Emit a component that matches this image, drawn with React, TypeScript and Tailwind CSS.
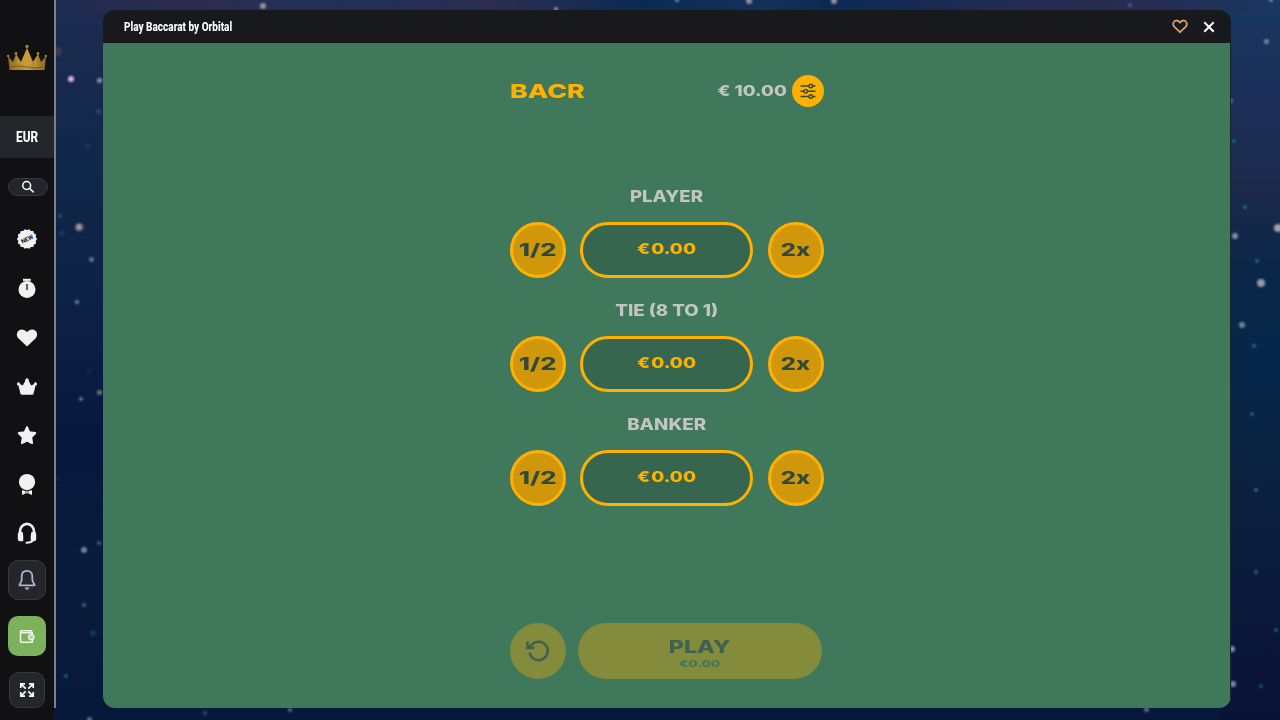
import React from "react";

const wide = "font-[Inter,sans-serif] font-extrabold whitespace-nowrap leading-none";

// x, y, diameter, colour
const stars: [number, number, number, string][] = [
  [71, 79, 6, "#e3b0f0"], [99, 80, 5, "#8f93a8"], [98, 111, 5, "#32446a"], [87, 146, 5, "#223959"],
  [57, 51, 9, "#3c3a4f"], [60, 216, 4, "#1d5570"], [61, 233, 5, "#164070"], [79, 227, 9, "#54465a"], [79, 227, 6, "#a19ba3"],
  [91, 259, 5, "#66758f"], [77, 302, 4, "#79869d"], [89, 371, 6, "#15264c"], [99, 392, 5, "#6d7a70"],
  [81, 399, 4, "#6d7e9c"], [56, 479, 3, "#0d3c60"], [84, 550, 6, "#7684a2"], [99, 543, 4, "#4f6480"],
  [84, 605, 4, "#4f6480"], [93, 633, 6, "#0f3b67"], [66, 676, 4, "#17648a"], [89, 719, 5, "#63718f"],
  [1266, 41, 5, "#77849f"], [1231, 101, 4, "#537ba1"], [1234, 141, 4, "#22658a"], [1245, 207, 4, "#1c7094"],
  [1278, 228, 8, "#a5a2ac"], [1235, 236, 6, "#8493ae"], [1257, 261, 4, "#15708b"], [1261, 283, 8, "#9899a6"],
  [1242, 325, 6, "#72859e"], [1254, 346, 4, "#186e7c"], [1252, 414, 4, "#216391"], [1256, 490, 4, "#216f91"],
  [1256, 572, 4, "#216391"], [1276, 630, 4, "#19637c"], [1232, 649, 6, "#8390ab"], [1233, 684, 6, "#7c89a8"],
  [1261, 686, 4, "#17587b"], [1271, 0, 4, "#7f8ba6"], [263, 6, 6, "#97939f"], [749, 1, 6, "#97939f"],
  [834, 1, 6, "#97939f"], [677, 0, 4, "#6f8fb4"], [556, 9, 4, "#7fa0c0"], [1130, 5, 4, "#2a6f9b"],
  [290, 710, 4, "#63718f"], [205, 713, 4, "#3a4a70"], [1146, 709, 5, "#63718f"],
];

function Crown() {
  return (
    <svg className="h-[27px] w-10" viewBox="0 0 40 27">
      <defs>
        <linearGradient id="gold" x1="0" x2="1">
          <stop offset="0" stopColor="#8a6a28" />
          <stop offset=".5" stopColor="#c99b36" />
          <stop offset="1" stopColor="#8f6c27" />
        </linearGradient>
      </defs>
      <path d="M1 12L6 18L9 10L14 18L20 4L26 18L31 10L34 18L39 12L37.500 26H2.500Z" fill="url(#gold)" />
      <path d="M20 4L14 18L17 24L20 20L23 24L26 18ZM9 10L14 18L10 23ZM31 10L26 18L30 23Z" fill="#d1a440" opacity=".3" />
      <path d="M3 23Q11 21 20 23T37 23" stroke="#745317" strokeWidth=".8" fill="none" />
      <g fill="#a9802f">
        <circle cx="20" cy="2.500" r="1.700" /><circle cx="9" cy="9.500" r="1.400" /><circle cx="31" cy="9.500" r="1.400" />
        <circle cx="1.200" cy="12" r="1.200" /><circle cx="38.800" cy="12" r="1.200" />
      </g>
    </svg>
  );
}

const badge = Array.from({ length: 28 }, (_, i) => {
  const a = (i * Math.PI) / 14;
  const r = i % 2 ? 8.9 : 10.1;
  return `${(11 + r * Math.cos(a)).toFixed(2)},${(11 + r * Math.sin(a)).toFixed(2)}`;
}).join(" ");

function NavIcons() {
  const c = "size-[22px] shrink-0 fill-[#f0f0f0]";
  return (
    <nav className="mt-8 flex flex-col items-center gap-[27px]">
      <svg className={c} viewBox="0 0 22 22">
        <polygon points={badge} />
        <text x="11" y="13.300" textAnchor="middle" transform="rotate(-25 11 11)" className="fill-[#111113] font-[Roboto,sans-serif] text-[6px] font-bold">NEW</text>
      </svg>
      <svg className={c} viewBox="0 -1 22 22">
        <path d="M7 .8H14.800V2.900H7Z" />
        <circle cx="11" cy="11.500" r="8.500" />
        <path d="M10.200 6H11.800V12H10.200Z" fill="#493b19" />
      </svg>
      <svg className={c} viewBox="0 -1.500 22 22"><path d="M11 19L2.300 10.800C.1 8.300 .6 4.900 2.600 3.200C5 1.300 8.700 1.900 11 4.800C13.300 1.900 17 1.300 19.400 3.200C21.400 4.900 21.900 8.300 19.700 10.800Z" /></svg>
      <svg className={c} viewBox="0 -1.500 22 22">
        <path d="M1.800 6.500L6.800 9L10 3H12L15.200 9L20.200 6.500L17.600 17Q17.300 18.200 16 18.200H6Q4.700 18.200 4.400 17Z" />
        <circle cx="11" cy="3.400" r="1.700" /><circle cx="2.500" cy="7.400" r="1.600" /><circle cx="19.500" cy="7.400" r="1.600" />
      </svg>
      <svg className={c} viewBox="0 -.500 22 22"><path d="M11 2.700L13.300 7.800L19.300 8.600L15.200 12.800L16.100 18.600L11 16.200L5.900 18.600L6.800 12.800L2.700 8.600L8.700 7.800Z" stroke="#f0f0f0" strokeWidth="2" strokeLinejoin="round" /></svg>
      <svg className={c} viewBox="0 -.700 22 22">
        <circle cx="11" cy="8.400" r="8.100" />
        <path d="M6 16.600L9.700 17.400L9.500 19.800L6 21.300ZM16 16.600L12.300 17.400L12.500 19.800L16 21.300Z" />
        <path d="M9.800 17.400H12.200V19.800H9.800Z" fill="#c9b46a" />
      </svg>
      <svg className={c} viewBox="0 0 22 22">
        <path d="M4 12V9.500A7 7.600 0 0 1 18 9.500V12" fill="none" stroke="#f0f0f0" strokeWidth="2.600" />
        <path d="M1.800 12Q1.800 10 4 10H6.600Q7.800 14 7.200 19.300H4Q1.800 19.300 1.800 17ZM20.200 12Q20.200 10 18 10H15.400Q14.200 14 14.800 19.300H18Q20.200 19.300 20.200 17Z" />
        <path d="M16.500 18.500Q15.500 20.700 10.500 20.700" fill="none" stroke="#f0f0f0" strokeWidth="2" strokeLinecap="round" />
      </svg>
    </nav>
  );
}

function Sidebar() {
  return (
    <aside className="relative flex w-[54px] shrink-0 flex-col items-center bg-[#111113]">
      <div className="flex h-[116px] w-full justify-center pt-11"><Crown /></div>
      <div className="flex h-[42px] w-full items-center justify-center bg-[#25262c]">
        <span className="scale-x-[0.84] font-[Roboto,sans-serif] text-sm font-extrabold text-white">EUR</span>
      </div>
      <button className="mt-5 ml-0.5 flex h-[18px] w-10 shrink-0 items-center justify-center rounded-full border border-[#383940] bg-[#25262c]">
        <svg className="size-3.5" viewBox="0 0 14 14" fill="none" stroke="#fff" strokeWidth="1.500"><circle cx="5.700" cy="5.500" r="3.900" /><path d="M8.500 8.200L12.700 12.400" /></svg>
      </button>
      <NavIcons />
      <div className="mt-4 flex flex-col items-center gap-4">
        <button className="flex h-10 w-[38px] items-center justify-center rounded-[10px] border border-[#383940] bg-[#25262c]">
          <svg className="size-[22px]" viewBox="0 0 22 22" fill="none" stroke="#b1b5c7" strokeWidth="1.800" strokeLinejoin="round">
            <path d="M11 1.800C7.300 1.800 5.700 4.500 5.700 7.300V10.500C5.700 12.500 4.700 14 3.500 15.300V16.300H18.500V15.300C17.300 14 16.300 12.500 16.300 10.500V7.300C16.300 4.500 14.700 1.800 11 1.800Z" />
            <path d="M8.700 18.500H13.300Q12.700 20.800 11 20.800T8.700 18.500Z" fill="#b1b5c7" stroke="none" />
          </svg>
        </button>
        <button className="flex h-10 w-[38px] items-center justify-center rounded-[10px] bg-[#7db25c]">
          <svg className="size-4" viewBox="0 0 16 16" fill="none" stroke="#eff5e8" strokeWidth="1.500">
            <path d="M13.300 5.500V4.300H12V2.700H2.700Q1.500 2.700 1.500 3.800V13Q1.500 14.200 2.700 14.200H13.300V12M2 4.700H13.300V6.500" />
            <rect x="9.800" y="6.800" width="5" height="4.700" rx="2" fill="#a9cfaf" />
          </svg>
        </button>
        <button className="flex size-9 items-center justify-center rounded-[10px] border border-[#383940] bg-[#25262c]">
          <svg className="size-4" viewBox="0 0 16 16" fill="none" stroke="#fff" strokeWidth="1.700">
            <path d="M1.800 6V1.800H6M10 1.800H14.200V6M14.200 10V14.200H10M6 14.200H1.800V10M2 2L6.700 6.700M14 2L9.300 6.700M14 14L9.300 9.300M2 14L6.700 9.300" />
          </svg>
        </button>
      </div>
    </aside>
  );
}

function Round({ label, cls }: { label: string; cls: string }) {
  return (
    <button className="flex size-14 items-center justify-center rounded-full border-[3px] border-[#ffb000] bg-[#d1970b] pt-0.5">
      <span className={`${wide} ${cls} text-[17px] text-[#2f4a38]`}>{label}</span>
    </button>
  );
}

function Bet({ label, cls }: { label: string; cls: string }) {
  return (
    <section className="flex flex-col items-center">
      <h2 className={`${wide} ${cls} flex h-[25px] items-start text-[15.500px] text-[#c3c5c4]`}>{label}</h2>
      <div className="mt-[8px] flex w-full items-center justify-between">
        <Round label="1/2" cls="scale-x-[1.5]" />
        <div className="flex h-14 w-[173px] items-center justify-center rounded-full border-[3px] border-[#ffb000] bg-[#36674e] pb-[2px]">
          <span className={`${wide} scale-x-[1.26] text-[15px] text-[#ffb000]`}><span className="mr-px">€</span>0.00</span>
        </div>
        <Round label="2x" cls="scale-x-[1.4]" />
      </div>
    </section>
  );
}

export default function App() {
  return (
    <div className="relative flex h-[720px] w-[1280px] overflow-hidden bg-[#0b1b3e] bg-[linear-gradient(180deg,#1d2b50_0,#10284a_170px,#0e2146_300px,#08173e_430px,#071b3a_560px,#07193b_720px)]">
      <div className="absolute top-0 right-0 h-full w-[60px] bg-[linear-gradient(180deg,#183862_0,#1c2f58_100px,#1b294b_190px,#0a2748_270px,#06274a_360px,#0a2140_470px,#0a1b3c_560px,#0a1238_720px)]" />
      <div className="absolute top-0 left-[56px] h-3 w-[1224px] bg-[linear-gradient(90deg,#1d2b50,#2d2c4f_12%,#21305a_22%,#2b2d50_36%,#0a2a54_48%,#14305a_58%,#0a2a54_63%,#222b50_78%,#2a2b50_88%,#183862)]" />
      {stars.map(([x, y, d, color], i) => (
        <i key={i} className="absolute rounded-full blur-[1px]" style={{ left: x - d / 2, top: y - d / 2, width: d, height: d, background: color }} />
      ))}
      <Sidebar />
      <div className="relative h-[708px] w-0.5 shrink-0 bg-[#7d7e87]" />
      <main className="relative mt-2.5 ml-[47px] flex h-[698px] w-[1128px] flex-col overflow-hidden rounded-xl">
        <header className="flex h-[33px] shrink-0 items-center justify-between bg-[#18191d] pr-4 pl-[21px]">
          <h1 className="origin-left scale-x-[0.835] font-[Roboto,sans-serif] text-xs font-extrabold whitespace-nowrap text-white">Play Baccarat by Orbital</h1>
          <div className="flex items-center gap-[15px]">
            <svg className="size-4" viewBox="0 0 16 16" fill="none" stroke="#d29f6c" strokeWidth="1.800"><path d="M8 13.200L2.200 7.700C.6 5.900 .9 3.300 2.800 2.100C4.600 1 6.800 1.800 8 3.600C9.200 1.800 11.400 1 13.200 2.100C15.100 3.300 15.400 5.900 13.800 7.700Z" /></svg>
            <svg className="size-3" viewBox="0 0 12 12" stroke="#fff" strokeWidth="2"><path d="M1.300 1.300L10.700 10.700M10.700 1.300L1.300 10.700" /></svg>
          </div>
        </header>
        <div className="flex flex-1 justify-center border-r border-[#1c2527] bg-[#40785b]">
          <div className="flex w-[314px] flex-col">
            <div className="mt-[32px] flex h-8 items-center justify-between">
              <span className={`${wide} origin-left scale-x-[1.41] text-[19px] text-[#ffb000]`}>BACR</span>
              <div className="flex items-center gap-[5px]">
                <span className={`${wide} mb-0.5 origin-right scale-x-[1.24] text-[15px] text-[#c3c5c4]`}>€ 10.00</span>
                <button className="flex size-8 items-center justify-center rounded-full bg-[#ffb000]">
                  <svg className="size-4" viewBox="0 0 16 16" fill="none" stroke="#2f4a38" strokeWidth="1.400">
                    <path d="M.5 3H9M12.500 3H15.500M.5 8.300H4M7.500 8.300H15.500M.5 13.500H9M12.500 13.500H15.500" />
                    <circle cx="10.700" cy="3" r="1.800" /><circle cx="5.700" cy="8.300" r="1.800" /><circle cx="10.700" cy="13.500" r="1.800" />
                  </svg>
                </button>
              </div>
            </div>
            <div className="mt-[81.500px] flex flex-col gap-[25.100px]">
              <Bet label="PLAYER" cls="scale-x-[1.2]" />
              <Bet label="TIE (8 TO 1)" cls="scale-x-[1.205]" />
              <Bet label="BANKER" cls="scale-x-[1.21]" />
            </div>
            <div className="mt-[117.500px] flex gap-[12.500px]">
              <button className="flex size-14 items-center justify-center rounded-full bg-[#848b3a]">
                <svg className="size-6" viewBox="0 0 24 24" fill="none" stroke="#3f6152" strokeWidth="2.500"><path d="M3.500 13.500A9.200 9.200 0 1 0 5.500 6L2 9M1.500 2.500V9H8.500" /></svg>
              </button>
              <button className="flex h-14 w-[244px] flex-col items-center rounded-full bg-[#848b3a] pt-[15.500px]">
                <span className={`${wide} scale-x-[1.36] text-[17px] text-[#3f6152]`}>PLAY</span>
                <span className={`${wide} mt-[3px] scale-x-[1.42] text-[9.500px] text-[#3f7859]`}>€0.00</span>
              </button>
            </div>
          </div>
        </div>
      </main>
    </div>
  );
}
